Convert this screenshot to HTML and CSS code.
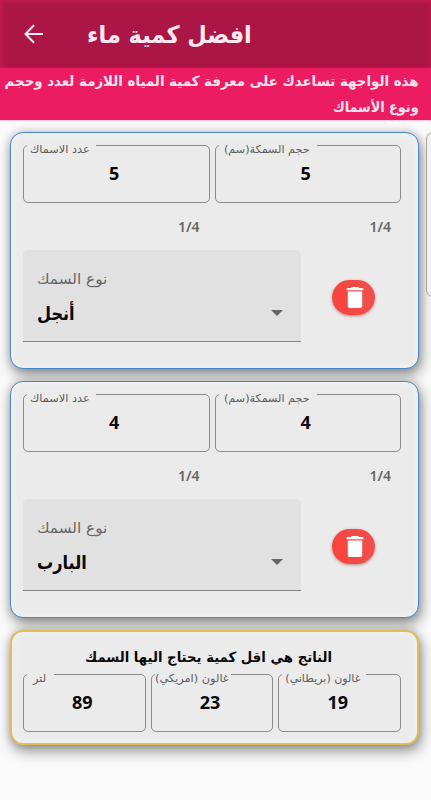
FILE: index.html
```html
<!DOCTYPE html>
<html lang="ar">
<head>
<meta charset="utf-8">
<meta name="viewport" content="width=device-width, initial-scale=1">
<title>افضل كمية ماء</title>
<link rel="stylesheet" href="styles.css">
</head>
<body>
<svg class="sprite" width="0" height="0" aria-hidden="true">
  <symbol id="trash" viewBox="0 0 18 24"><path d="M1.500 5.800h15v15.700a1.500 1.500 0 0 1-1.500 1.500h-12a1.500 1.500 0 0 1-1.500-1.500zM0.300 2.200H4.500L5.800 1h6.400l1.300 1.200h4.200v2.200H0.300z"/></symbol>
</svg>
<header class="appbar">
  <svg class="back" viewBox="0 0 20 20"><path d="M19 10H2M10 1.200 1.500 10 10 18.800"/></svg>
  <h1 dir="rtl">افضل كمية ماء</h1>
</header>
<p class="banner" dir="rtl"><span>هذه الواجهة تساعدك على معرفة كمية المياه اللازمة لعدد وحجم</span><br><span class="second">ونوع الأسماك</span></p>
<main>
  <section class="cards">
    <article class="card fish">
      <div class="fields">
        <fieldset><legend class="count"><span dir="rtl">عدد الاسماك</span></legend><b>5</b></fieldset>
        <fieldset><legend class="size"><span dir="rtl">حجم السمكة(سم)</span></legend><b>5</b></fieldset>
      </div>
      <div class="counters"><span>1/4</span><span>1/4</span></div>
      <div class="kind">
        <div class="select">
          <span class="label"><span dir="rtl">نوع السمك</span></span>
          <span class="value"><span dir="rtl">أنجل</span><i class="caret"></i></span>
        </div>
        <div class="action"><button class="delete" aria-label="حذف"><svg><use href="#trash"/></svg></button></div>
      </div>
    </article>
    <article class="card fish">
      <div class="fields">
        <fieldset><legend class="count"><span dir="rtl">عدد الاسماك</span></legend><b>4</b></fieldset>
        <fieldset><legend class="size"><span dir="rtl">حجم السمكة(سم)</span></legend><b>4</b></fieldset>
      </div>
      <div class="counters"><span>1/4</span><span>1/4</span></div>
      <div class="kind">
        <div class="select">
          <span class="label"><span dir="rtl">نوع السمك</span></span>
          <span class="value"><span dir="rtl">البارب</span><i class="caret"></i></span>
        </div>
        <div class="action"><button class="delete" aria-label="حذف"><svg><use href="#trash"/></svg></button></div>
      </div>
    </article>
    <article class="card result">
      <h2 dir="rtl"><span>الناتج هي اقل كمية يحتاج اليها السمك</span></h2>
      <div class="fields">
        <fieldset><legend class="litre"><span dir="rtl">لتر</span></legend><b>89</b></fieldset>
        <fieldset><legend class="us"><span dir="rtl">غالون (امريكي)</span></legend><b>23</b></fieldset>
        <fieldset><legend class="uk"><span dir="rtl">غالون (بريطاني)</span></legend><b>19</b></fieldset>
      </div>
    </article>
  </section>
  <aside class="next"></aside>
</main>
</body>
</html>
```
FILE: styles.css
```css
* { box-sizing: border-box; }
body {
  margin: 0;
  height: 800px;
  overflow: hidden;
  background: #fafafa;
  color: #080808;
  font-family: "Noto Sans", "DejaVu Sans", sans-serif;
}
.sprite { display: block; }
.appbar {
  display: flex;
  align-items: center;
  gap: 43px;
  height: 68px;
  padding-left: 24px;
  background: #ab1646;
  box-shadow: inset 3px 2px 5px #c01c50, inset -2px 0 4px #b8194c;
  color: #ffe9f1;
}
.back { width: 20px; height: 20px; fill: none; stroke: currentColor; stroke-width: 2; }
h1 {
  margin: 2px 0 0;
  font: bold 24px/40px "DejaVu Sans", sans-serif;
  white-space: nowrap;
  transform: scaleX(.935);
  transform-origin: left;
}
.banner {
  margin: 0;
  height: 53px;
  padding: 0 12px 0 0;
  background: #ec1c62;
  border-bottom: 1px solid #ffc5dc;
  color: #ffe4ee;
  font: bold 14px/26px "DejaVu Sans", sans-serif;
  white-space: nowrap;
}
.banner span { display: inline-block; transform: scaleX(.955); transform-origin: right; }
.banner .second { transform: scaleX(.915); }
main { display: flex; gap: 7px; padding: 11px 0 0 10px; }
.cards { display: grid; gap: 12px; flex: 0 0 409px; }
.card {
  padding: 12px;
  background: #ebebeb;
  border: 1.500px solid #4b86cf;
  border-radius: 13px;
  box-shadow: 2px 6px 14px rgba(0, 0, 0, .42), 0 0 8px rgba(0, 0, 0, .18), inset 0 0 7px #f3f5f5;
}
.fish { height: 237px; padding-right: 17px; }
.result { height: 115px; border: 2px solid #e3bc55; padding: 11px 16px 11px 11px; }
.fields { display: flex; gap: 5px; height: 58px; }
fieldset {
  flex: 1 1 0;
  min-width: 0;
  height: 58px;
  margin: 0;
  padding: 0;
  border: 1px solid #8c8c8c;
  border-radius: 5px;
  text-align: center;
}
legend { height: 1px; margin-left: 3px; padding: 0; text-align: left; }
legend span {
  display: block;
  width: max-content;
  transform: scaleX(1.03);
  transform-origin: left;
  font: 11px/14px "DejaVu Sans", sans-serif;
  color: #5c5c5c;
  position: relative;
  top: -2px;
  left: 3px;
  white-space: nowrap;
}
.count { width: 69px; }
.size { width: 98px; }
.size span { left: 5px; transform: scaleX(1.015); }
.litre { width: 27px; }
.litre span { left: 6px; }
.us { width: 76px; }
.us span { left: 0; }
.uk { width: 84px; }
.uk span { transform: scaleX(1); }
fieldset b { display: block; padding-right: 4px; font-size: 18px; line-height: 54px; }
.counters {
  display: flex;
  gap: 5px;
  height: 47px;
  color: #666;
  font-size: 14px;
  font-weight: 600;
  line-height: 47px;
  text-align: right;
}
.counters span { flex: 1; padding-right: 10px; }
.kind { display: flex; }
.select {
  width: 278px;
  height: 92px;
  padding: 17px 18px 0 14px;
  background: #e1e1e1;
  border-bottom: 1.500px solid #858585;
  border-radius: 5px 5px 0 0;
}
.label { display: block; height: 24px; color: #666; font: 14px/24px "DejaVu Sans", sans-serif; }
.label span { display: inline-block; transform: scaleX(1.09); transform-origin: left; }
.value { display: flex; justify-content: space-between; align-items: center; height: 44px; font: bold 19px/44px "DejaVu Sans", sans-serif; }
.value span { display: inline-block; transform: scaleX(.85); transform-origin: left; }
.caret { border: 6px solid transparent; border-top-color: #666; border-bottom: 0; }
.action { flex: 1; display: grid; place-items: center; padding: 2px 0 0 4px; }
.delete {
  display: grid;
  place-items: center;
  width: 43px;
  height: 35px;
  padding: 0 0 0 4px;
  border: 0;
  border-radius: 18px;
  background: linear-gradient(90deg, #f9433c, #ee504d);
  box-shadow: 0 1px 3px rgba(150, 40, 40, .5);
}
.delete svg { width: 18px; height: 23px; fill: #fff; }
h2 { margin: 0; height: 31px; font: bold 14px/29px "DejaVu Sans", sans-serif; text-align: center; white-space: nowrap; }
h2 span { display: inline-block; margin-right: 7px; transform: scaleX(.946); }
.next {
  flex: 0 0 20px;
  height: 165px;
  border: 1px solid #a5a5a5;
  border-radius: 7px;
  background: #f1f1f1;
}
```
